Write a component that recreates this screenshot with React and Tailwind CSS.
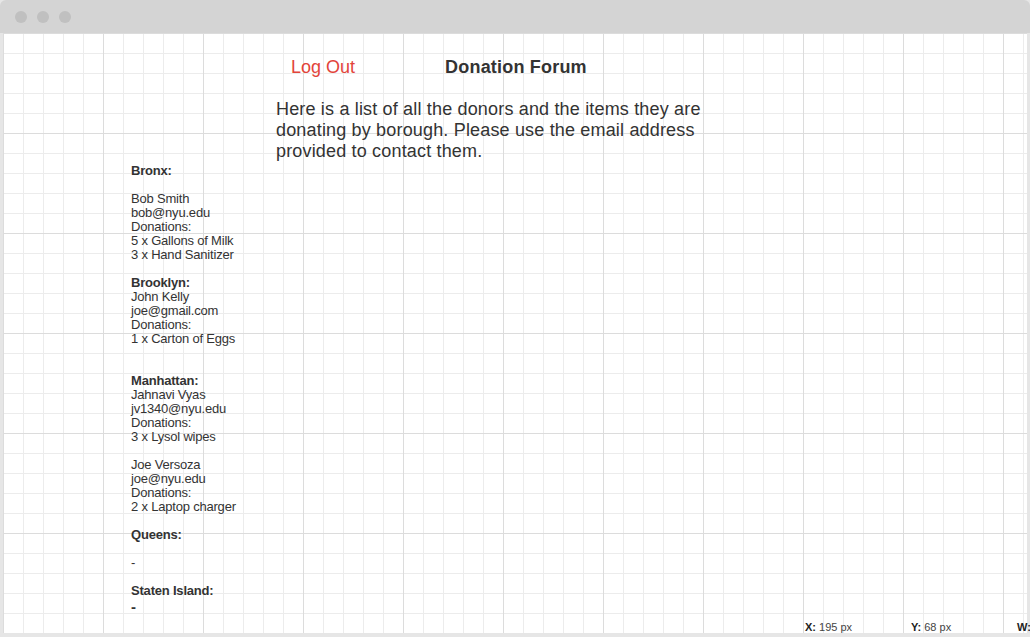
import React from 'react';

const boroughs = [
  {
    name: 'Bronx:',
    gapAfterTitle: true,
    donors: [
      { name: 'Bob Smith', email: 'bob@nyu.edu', items: ['5 x Gallons of Milk', '3 x Hand Sanitizer'] },
    ],
  },
  {
    name: 'Brooklyn:',
    extraGap: true,
    donors: [
      { name: 'John Kelly', email: 'joe@gmail.com', items: ['1 x Carton of Eggs'] },
    ],
  },
  {
    name: 'Manhattan:',
    donors: [
      { name: 'Jahnavi Vyas', email: 'jv1340@nyu.edu', items: ['3 x Lysol wipes'] },
      { name: 'Joe Versoza', email: 'joe@nyu.edu', items: ['2 x Laptop charger'] },
    ],
  },
];

function Donor({ d }) {
  return (
    <div>
      <div>{d.name}</div>
      <div>{d.email}</div>
      <div>Donations:</div>
      {d.items.map((it) => (
        <div key={it}>{it}</div>
      ))}
    </div>
  );
}

export default function App() {
  return (
    <div
      className="relative flex h-[637px] w-[1030px] flex-col overflow-hidden bg-[#e6e6e6] text-[#333]"
      style={{ fontFamily: '"Liberation Sans", Arial, sans-serif' }}
    >
      {/* window chrome */}
      <div className="flex h-[33px] items-center gap-[10px] rounded-t-[6px] bg-[#d4d4d4] pl-[15px]">
        <span className="h-[12px] w-[12px] rounded-full bg-[#c0c0c0]" />
        <span className="h-[12px] w-[12px] rounded-full bg-[#c0c0c0]" />
        <span className="h-[12px] w-[12px] rounded-full bg-[#c0c0c0]" />
      </div>

      <div className="mx-[3px] mb-[4px] flex-1 bg-white bg-[image:linear-gradient(to_right,#dcdcdc_1px,transparent_1px),linear-gradient(to_bottom,#dcdcdc_1px,transparent_1px),linear-gradient(to_right,#ececec_1px,transparent_1px),linear-gradient(to_bottom,#ececec_1px,transparent_1px)] bg-[size:100px_100px,100px_100px,20px_20px,20px_20px]">
        <div className="flex pt-[24px] text-[18px] leading-[21px]">
          <a className="ml-[288px] text-[#e2443a]">Log Out</a>
          <h1 className="ml-[90px] font-bold tracking-[0.2px]">Donation Forum</h1>
        </div>

        <p className="ml-[273px] mt-[21px] text-[18px] leading-[21px] tracking-[0.17px]">
          <span className="block">Here is a list of all the donors and the items they are</span>
          <span className="block">donating by borough. Please use the email address</span>
          <span className="block">provided to contact them.</span>
        </p>

        <div className="ml-[128px] mt-[2px] text-[13px] leading-[14px] tracking-[-0.2px]">
          {boroughs.map((b) => (
            <div key={b.name} className={b.extraGap ? 'mb-[28px]' : 'mb-[14px]'}>
              <div className={`font-bold ${b.gapAfterTitle ? 'mb-[14px]' : ''}`}>{b.name}</div>
              <div className="flex flex-col gap-[14px]">
                {b.donors.map((d) => (
                  <Donor key={d.email} d={d} />
                ))}
              </div>
            </div>
          ))}
          <div className="mb-[14px]">
            <div className="font-bold">Queens:</div>
            <div className="mt-[14px]">-</div>
          </div>
          <div>
            <div className="font-bold">Staten Island:</div>
            <div className="mt-[1px] text-[15px] font-bold leading-[16px]">-</div>
          </div>
        </div>
      </div>

      {/* cursor position readout */}
      <div className="absolute bottom-[3px] right-0 flex text-[11px] leading-[13px] text-[#444]">
        <span className="w-[106px]"><b className="text-[#222]">X:</b> 195 px</span>
        <span className="w-[106px]"><b className="text-[#222]">Y:</b> 68 px</span>
        <span className="w-[13px]"><b className="text-[#222]">W:</b></span>
      </div>
    </div>
  );
}
